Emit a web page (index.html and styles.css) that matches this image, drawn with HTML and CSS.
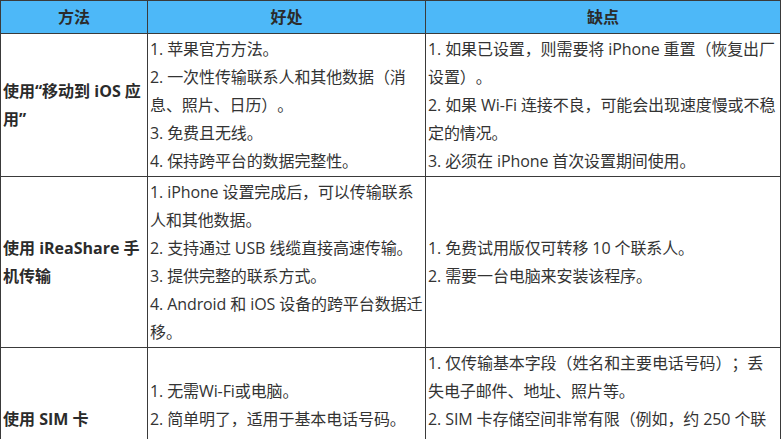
FILE: index.html
```html
<!DOCTYPE html>
<html lang="zh-CN">
<head>
<meta charset="utf-8">
<title>联系人迁移方法对比</title>
<link rel="stylesheet" href="styles.css">
</head>
<body>
<table class="compare">
  <colgroup>
    <col class="col-method">
    <col class="col-pros">
    <col class="col-cons">
  </colgroup>
  <thead>
    <tr>
      <th>方法</th>
      <th>好处</th>
      <th>缺点</th>
    </tr>
  </thead>
  <tbody>
    <tr>
      <td class="method">使用“移动到 iOS 应用”</td>
      <td>1. 苹果官方方法。<br>2. 一次性传输联系人和其他数据（消息、照片、日历）。<br>3. 免费且无线。<br>4. 保持跨平台的数据完整性。</td>
      <td>1. 如果已设置，则需要将 iPhone 重置（恢复出厂设置）。<br>2. 如果 Wi-Fi 连接不良，可能会出现速度慢或不稳定的情况。<br>3. 必须在 iPhone 首次设置期间使用。</td>
    </tr>
    <tr>
      <td class="method">使用 iReaShare 手机传输</td>
      <td>1. iPhone 设置完成后，可以传输联系人和其他数据。<br>2. 支持通过 USB 线缆直接高速传输。<br>3. 提供完整的联系方式。<br>4. Android 和 iOS 设备的跨平台数据迁移。</td>
      <td>1. 免费试用版仅可转移 10 个联系人。<br>2. 需要一台电脑来安装该程序。</td>
    </tr>
    <tr>
      <td class="method">使用 SIM 卡</td>
      <td>1. 无需Wi-Fi或电脑。<br>2. 简单明了，适用于基本电话号码。<br>3. 几乎所有手机都支持。</td>
      <td>1. 仅传输基本字段（姓名和主要电话号码）；丢失电子邮件、地址、照片等。<br>2. SIM 卡存储空间非常有限（例如，约 250 个联系人）。<br>3. 存在联系人信息被截断的风险。</td>
    </tr>
  </tbody>
</table>
</body>
</html>
```

FILE: styles.css
```css
html, body {
  margin: 0;
  padding: 0;
  background: #ffffff;
}

body {
  font-family: "Open Sans", "Noto Sans CJK SC", sans-serif;
  font-size: 16px;
  color: #333333;
}

.compare {
  width: 780px;
  table-layout: fixed;
  border-collapse: collapse;
  text-spacing-trim: space-all;
}

.col-method { width: 147px; }
.col-pros { width: 278px; }
.col-cons { width: 355px; }

.compare th,
.compare td {
  border: 1px solid #3a3a3a;
  line-height: 28px;
  vertical-align: middle;
  text-align: left;
  padding: 1px 1px 1px 2px;
  letter-spacing: -0.1px;
  word-break: break-all;
}

.compare th {
  background: #4db8f8;
  color: #2b2b2b;
  font-weight: 700;
  text-align: center;
  padding: 2px 2px;
  letter-spacing: 0;
}

.compare td.method {
  font-weight: 700;
  color: #2b2b2b;
  letter-spacing: 0;
}
```
